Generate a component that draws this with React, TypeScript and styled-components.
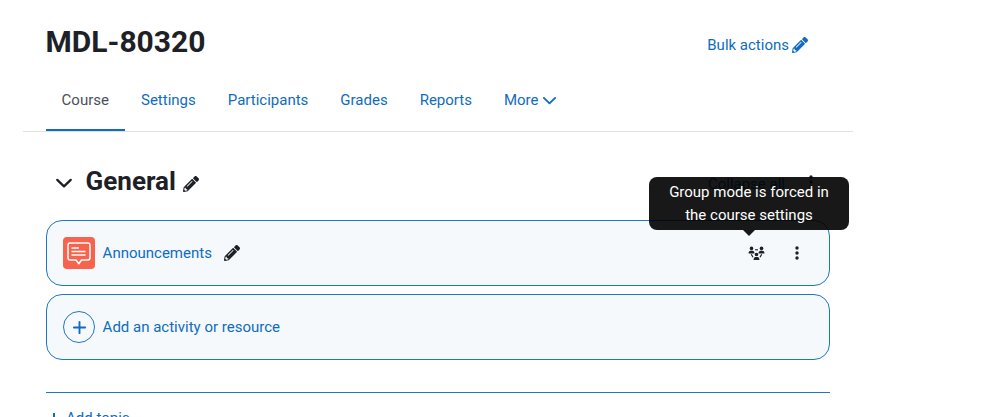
import React from "react";
import styled, { createGlobalStyle } from "styled-components";
import { FaPencilAlt } from "react-icons/fa";

const Global = createGlobalStyle`
  html, body { margin: 0; height: 417px; overflow: hidden; background: #fff; }
  body { font-family: Roboto, "Liberation Sans", sans-serif; font-size: 15px; color: #1d2125; }
`;
const Page = styled.main`
  width: 830px;
  margin-left: 23px;
  position: relative;
`;
const Header = styled.header`
  display: flex;
  justify-content: space-between;
  align-items: center;
  height: 83px;
  padding: 1px 45px 0 22.6px;
  box-sizing: border-box;
`;
const Title = styled.h1`
  margin: 0;
  font-size: 30px;
  line-height: 36px;
  font-weight: 700;
`;
const LinkText = styled.a`
  color: #0f6cbf;
  font-size: 15px;
  line-height: 22px;
  text-decoration: none;
  display: inline-flex;
  align-items: center;
`;
const BulkLink = styled(LinkText)`
  gap: 3px;
  margin: 6px 0 0;
`;
const Tabs = styled.nav`
  display: flex;
  height: 48px;
  padding-left: 22.6px;
  border-bottom: 1px solid #dee2e6;
`;
const Tab = styled.a<{ $active?: boolean }>`
  display: flex;
  align-items: center;
  gap: 4px;
  padding: 0 16px 12px;
  height: 48px;
  box-sizing: border-box;
  color: ${(p) => (p.$active ? "#495057" : "#0f6cbf")};
  border-bottom: 2px solid ${(p) => (p.$active ? "#0f6cbf" : "transparent")};
`;
const Section = styled.section`
  padding: 0 23px 0 23px;
`;
const SectionHead = styled.div`
  display: flex;
  align-items: center;
  height: 88px;
  box-sizing: border-box;
  padding: 10px 0 0 9px;
`;
const Chevron = styled.span`
  width: 30.6px;
  display: flex;
  margin-top: 4px;
`;
const SectionTitle = styled.h2`
  margin: 0 7px 0 0;
  font-size: 26px;
  line-height: 32px;
  font-weight: 700;
`;
const TitlePencil = styled.span`
  display: flex;
  margin-top: 5px;
  color: #1d2125;
`;
const HeadActions = styled.div`
  margin-left: auto;
  display: flex;
  align-items: center;
  gap: 24px;
  padding-right: 17px;
`;
const CollapseText = styled.span`
  color: #0f6cbf;
  font-size: 15px;
  margin-top: 5px;
`;
const HeadDots = styled.span`
  display: flex;
  margin-top: 1px;
`;
const Card = styled.div`
  height: 66px;
  box-sizing: border-box;
  margin-bottom: 8px;
  background: #f5f9fc;
  border: 1px solid #1f76c4;
  border-radius: 16px;
  display: flex;
  align-items: center;
  padding: 0 16px;
  color: #0f6cbf;
`;
const ActivityIcon = styled.span`
  width: 32px;
  height: 32px;
  border-radius: 4px;
  background: #f7634d;
  display: flex;
  align-items: center;
  justify-content: center;
  margin-right: 7.6px;
`;
const EditIcon = styled.span`
  margin-left: 12.4px;
  display: flex;
  color: #1d2125;
`;
const RowActions = styled.div`
  margin-left: auto;
  display: flex;
  align-items: center;
  gap: 30px;
  padding-right: 14px;
  color: #1d2125;
`;
const PlusCircle = styled.span`
  width: 30px;
  height: 30px;
  border: 1px solid #1f76c4;
  border-radius: 50%;
  display: flex;
  align-items: center;
  justify-content: center;
  margin-right: 7.6px;
`;
const Rule = styled.div`
  margin-top: 32px;
  height: 1px;
  background: #1f76c4;
`;
const AddTopic = styled(LinkText)`
  margin: 14px 0 0 3px;
  gap: 7px;
`;
const Tooltip = styled.div`
  position: absolute;
  left: 626px;
  top: 177px;
  width: 200px;
  height: 53px;
  box-sizing: border-box;
  padding: 4px 8px;
  background: #000;
  opacity: 0.9;
  border-radius: 8px;
  color: #fff;
  font-size: 15px;
  line-height: 23px;
  text-align: center;
  &::after {
    content: "";
    position: absolute;
    left: 94px;
    bottom: -6px;
    border: 6px solid transparent;
    border-bottom: 0;
    border-top-color: #000;
  }
`;

const Dots = ({ color = "#1d2125" }: { color?: string }) => (
  <svg width="4" height="14" viewBox="0 0 4 14" fill={color}>
    <circle cx="2" cy="2" r="1.7" />
    <circle cx="2" cy="7" r="1.7" />
    <circle cx="2" cy="12" r="1.7" />
  </svg>
);
const ChevronDown = ({ size, color, w = 2 }: { size: number; color: string; w?: number }) => (
  <svg width={size} height={size} viewBox="0 0 16 16" fill="none" stroke={color} strokeWidth={w} strokeLinecap="round" strokeLinejoin="round">
    <path d="M2 5.2 L8 11 L14 5.2" />
  </svg>
);
const GroupIcon = () => (
  <svg width="17" height="15" viewBox="0 0 16 14" fill="#1d2125">
    <circle cx="3.3" cy="2.2" r="1.7" />
    <path d="M0.5 7 C0.5 4.8 1.6 4.4 3.3 4.4 C5 4.4 6.1 4.8 6.1 7 Z" />
    <circle cx="12.7" cy="2.2" r="1.7" />
    <path d="M9.9 7 C9.9 4.8 11 4.4 12.7 4.4 C14.4 4.4 15.5 4.8 15.5 7 Z" />
    <circle cx="8" cy="8" r="1.7" />
    <path d="M5.2 13.2 C5.2 10.9 6.3 10.4 8 10.4 C9.7 10.4 10.8 10.9 10.8 13.2 Z" />
    <path d="M6.6 3 h2.8 v1 h-2.8 Z" />
    <path d="M2.6 8 l1 -.5 l1.6 2.8 l-1 .5 Z M13.4 8 l-1 -.5 l-1.6 2.8 l1 .5 Z" />
  </svg>
);
const ChatIcon = () => (
  <svg width="24" height="24" viewBox="0 0 24 24" fill="none" stroke="#fff" strokeLinejoin="round">
    <path d="M3.2 2 H20.8 Q23 2 23 4.2 V16.8 Q23 19 20.8 19 H14.5 L11.8 22.8 L9 19 H3.2 Q1 19 1 16.8 V4.2 Q1 2 3.2 2 Z" strokeWidth="1.5" />
    <path d="M4.5 7 H12 M4.5 10.5 H18.5 M4.5 14 H18.5" strokeWidth="1.4" />
  </svg>
);

export default function App() {
  return (
    <>
      <Global />
      <Page>
        <Header>
          <Title>MDL-80320</Title>
          <BulkLink>
            Bulk actions <FaPencilAlt size={16} />
          </BulkLink>
        </Header>
        <Tabs>
          <Tab $active>Course</Tab>
          <Tab>Settings</Tab>
          <Tab>Participants</Tab>
          <Tab>Grades</Tab>
          <Tab>Reports</Tab>
          <Tab>
            More <ChevronDown size={15} color="#0f6cbf" />
          </Tab>
        </Tabs>
        <Section>
          <SectionHead>
            <Chevron>
              <ChevronDown size={18} color="#1d2125" />
            </Chevron>
            <SectionTitle>General</SectionTitle>
            <TitlePencil>
              <FaPencilAlt size={16} />
            </TitlePencil>
            <HeadActions>
              <CollapseText>Collapse all</CollapseText>
              <HeadDots>
                <Dots />
              </HeadDots>
            </HeadActions>
          </SectionHead>
          <Card>
            <ActivityIcon>
              <ChatIcon />
            </ActivityIcon>
            Announcements
            <EditIcon>
              <FaPencilAlt size={16} />
            </EditIcon>
            <RowActions>
              <GroupIcon />
              <Dots />
            </RowActions>
          </Card>
          <Card>
            <PlusCircle>
              <svg width="15" height="15" viewBox="0 0 16 16" stroke="#0f6cbf" strokeWidth="2" strokeLinecap="round">
                <path d="M8 2 V14 M2 8 H14" />
              </svg>
            </PlusCircle>
            Add an activity or resource
          </Card>
          <Rule />
          <AddTopic>
            <svg width="10" height="10" viewBox="0 0 10 10" stroke="#0f6cbf" strokeWidth="2">
              <path d="M5 0 V10 M0 5 H10" />
            </svg>
            Add topic
          </AddTopic>
        </Section>
        <Tooltip>
          Group mode is forced in
          <br />
          the course settings
        </Tooltip>
      </Page>
    </>
  );
}
